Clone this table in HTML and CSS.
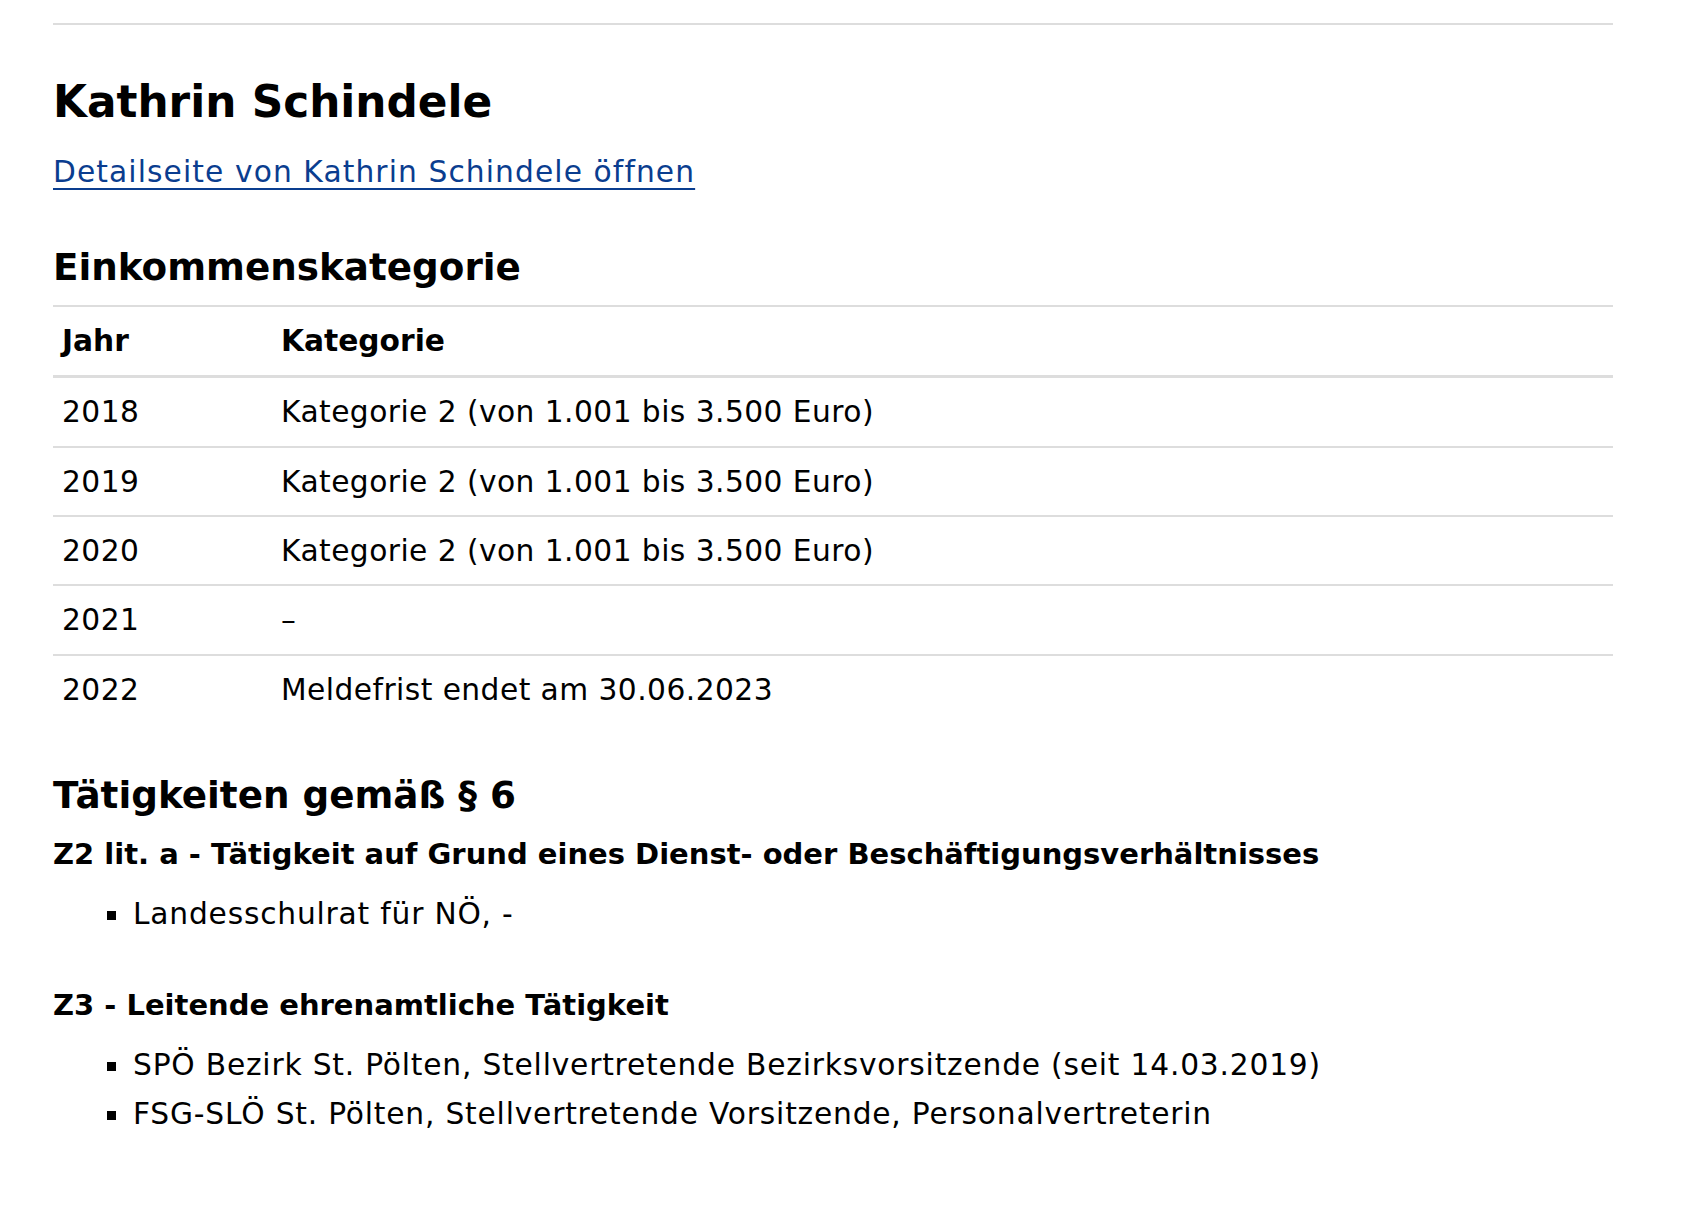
FILE: index.html
```html
<!DOCTYPE html>
<html lang="de">
<head>
<meta charset="utf-8">
<title>Kathrin Schindele</title>
<link rel="stylesheet" href="styles.css">
</head>
<body>
<main class="page">
  <hr class="rule">
  <h1 class="name">Kathrin Schindele</h1>
  <a class="detail-link" href="#">Detailseite von Kathrin Schindele öffnen</a>

  <h2 class="section-title section-income">Einkommenskategorie</h2>
  <table class="income">
    <thead>
      <tr><th class="col-year">Jahr</th><th>Kategorie</th></tr>
    </thead>
    <tbody>
      <tr><td>2018</td><td>Kategorie 2 (von 1.001 bis 3.500 Euro)</td></tr>
      <tr><td>2019</td><td>Kategorie 2 (von 1.001 bis 3.500 Euro)</td></tr>
      <tr><td>2020</td><td>Kategorie 2 (von 1.001 bis 3.500 Euro)</td></tr>
      <tr><td>2021</td><td>–</td></tr>
      <tr><td>2022</td><td>Meldefrist endet am 30.06.2023</td></tr>
    </tbody>
  </table>

  <h2 class="section-title section-activities">Tätigkeiten gemäß § 6</h2>
  <h3 class="sub-title">Z2 lit. a - Tätigkeit auf Grund eines Dienst- oder Beschäftigungsverhältnisses</h3>
  <ul class="items">
    <li>Landesschulrat für NÖ, -</li>
  </ul>
  <h3 class="sub-title sub-spaced">Z3 - Leitende ehrenamtliche Tätigkeit</h3>
  <ul class="items">
    <li>SPÖ Bezirk St. Pölten, Stellvertretende Bezirksvorsitzende (seit 14.03.2019)</li>
    <li>FSG-SLÖ St. Pölten, Stellvertretende Vorsitzende, Personalvertreterin</li>
  </ul>
</main>
</body>
</html>
```

FILE: styles.css
```css
html, body {
  margin: 0;
  padding: 0;
  background: #ffffff;
}

body {
  font-family: "DejaVu Sans", "Noto Sans", sans-serif;
  color: #000000;
  font-size: 29.7px;
  line-height: 36px;
}

.page {
  width: 1560px;
  padding: 23px 0 0 53px;
}

.rule {
  margin: 0;
  border: 0;
  height: 2px;
  background: #dddddd;
}

.name {
  margin: 51px 0 0;
  font-size: 43.8px;
  line-height: 1.2;
  font-weight: 700;
}

.detail-link {
  display: inline-block;
  margin-top: 25px;
  font-size: 29.7px;
  letter-spacing: 1.1px;
  color: #0a3d8f;
  text-decoration: underline;
  text-decoration-thickness: 2px;
  text-underline-offset: 6px;
}

.section-title {
  margin: 0;
  font-size: 37.3px;
  line-height: 1.2;
  font-weight: 700;
}

.section-income {
  margin-top: 55px;
}

.section-activities {
  margin-top: 50px;
}

.income {
  margin-top: 16px;
  width: 100%;
  border-collapse: collapse;
  border-top: 2px solid #dddddd;
}

.income th,
.income td {
  padding: 16px 9px 15.4px;
  text-align: left;
  vertical-align: top;
  line-height: 36px;
}

.income td {
  letter-spacing: 0.45px;
}

.income th {
  font-weight: 700;
  padding-bottom: 16px;
  border-bottom: 3px solid #dddddd;
}

.income tbody td {
  border-bottom: 2px solid #dddddd;
}

.income tbody tr:last-child td {
  border-bottom: 0;
}

.col-year {
  width: 201px;
}

.sub-title {
  margin: 18px 0 0;
  font-size: 29px;
  line-height: 36px;
  font-weight: 700;
}

.sub-spaced {
  margin-top: 49px;
}

.items {
  list-style: none;
  margin: 17px 0 0;
  padding: 0 0 0 80px;
}

.items li {
  line-height: 49px;
  letter-spacing: 0.8px;
}

.items li::before {
  content: "";
  display: inline-block;
  width: 9px;
  height: 9px;
  background: #000000;
  vertical-align: middle;
  margin-left: -26px;
  margin-right: 17px;
}
```
